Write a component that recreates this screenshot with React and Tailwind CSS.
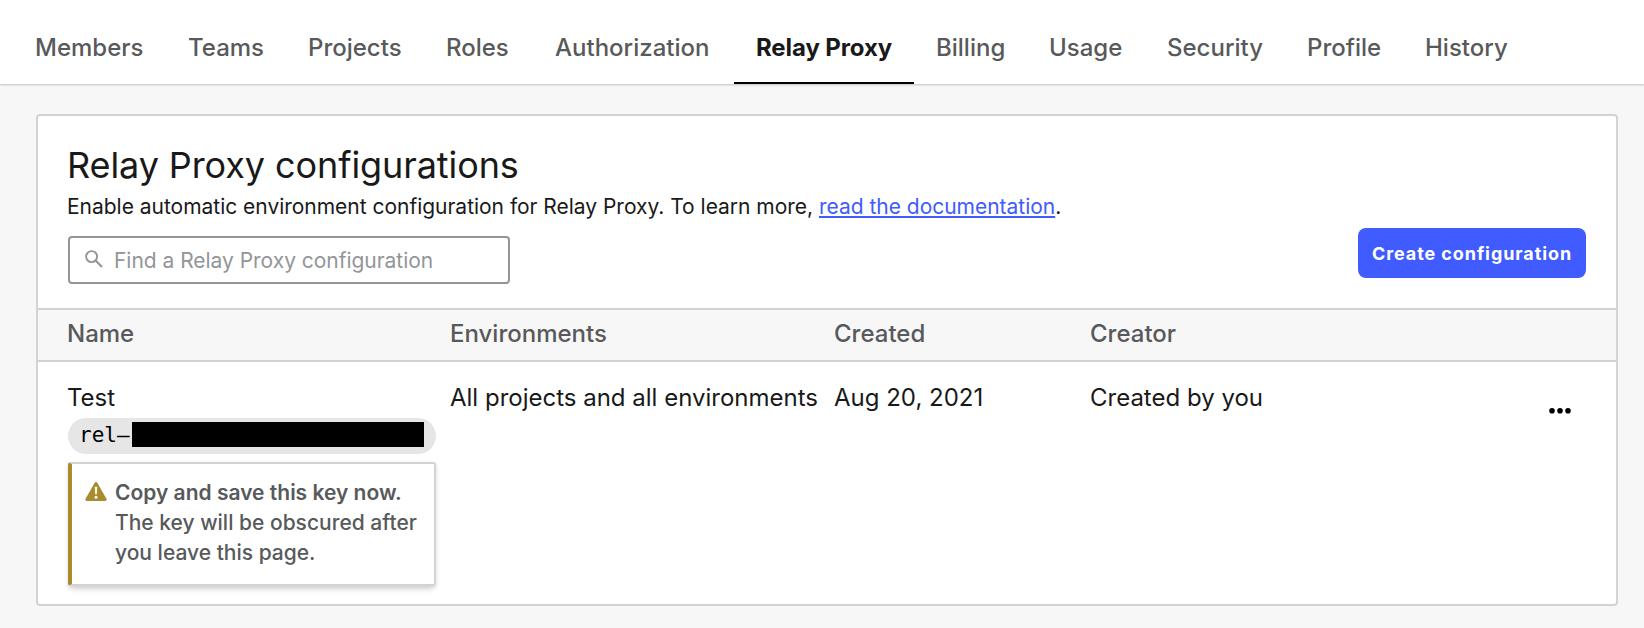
import React from "react";

const tabs = [
  { label: "Members", width: "w-[153px]" },
  { label: "Teams", width: "w-[120px]" },
  { label: "Projects", width: "w-[138px]" },
  { label: "Roles", width: "w-[109px]" },
  { label: "Authorization", width: "w-[201px]" },
  { label: "Relay Proxy", width: "w-[180px]", active: true },
  { label: "Billing", width: "w-[113px]" },
  { label: "Usage", width: "w-[118px]" },
  { label: "Security", width: "w-[140px]" },
  { label: "Profile", width: "w-[118px]" },
  { label: "History", width: "w-[126px]" },
];

function Nav() {
  return (
    <nav className="flex h-[84px] shrink-0 bg-white pl-[13px] shadow-[0_1px_2px_rgba(0,0,0,0.22)]">
      {tabs.map((t) => (
        <a
          key={t.label}
          className={`flex h-[84px] shrink-0 items-center border-b-2 pt-3.5 pl-[22px] text-2xl whitespace-nowrap ${t.width} ${
            t.active ? "border-black font-bold tracking-[-0.1px] text-[#191919]" : "border-transparent font-medium text-[#58595b]"
          }`}
        >
          {t.label}
        </a>
      ))}
    </nav>
  );
}

function SearchIcon() {
  return (
    <svg viewBox="0 0 18 18" className="-mt-0.5 h-[18px] w-[18px] shrink-0" fill="none" stroke="#939598" strokeWidth="1.9">
      <circle cx="6.6" cy="6.6" r="5.5" />
      <path d="M10.6 10.6 17 17" strokeWidth="2.1" />
    </svg>
  );
}

function WarningIcon() {
  return (
    <svg viewBox="0 0 22 19" className="mt-[5px] h-[19px] w-[22px] shrink-0">
      <path d="M9.6.9a1.6 1.6 0 0 1 2.8 0l8.9 15.6A1.6 1.6 0 0 1 19.9 19H2.1a1.6 1.6 0 0 1-1.4-2.5Z" fill="#a88b2c" />
      <path d="M9.8 4.8h2.4l-.4 7.4h-1.6Z" fill="#fff" />
      <circle cx="11" cy="15.2" r="1.5" fill="#fff" />
    </svg>
  );
}

function CardHeader() {
  return (
    <header className="flex h-[192px] items-end justify-between pr-[30px] pl-[29px]">
      <div className="flex h-full flex-col pt-[26px]">
        <h1 className="text-4xl leading-[46px] tracking-[-0.09px] whitespace-nowrap">Relay Proxy configurations</h1>
        <p className="mt-1 text-[21px] leading-[30px] tracking-[-0.02px] whitespace-nowrap">
          Enable automatic environment configuration for Relay Proxy. To learn more,{" "}
          <a className="text-[#405bff] underline decoration-2 underline-offset-2">read the documentation</a>.
        </p>
        <div className="mt-[14px] ml-px flex h-12 w-[442px] shrink-0 items-center gap-[11px] rounded border-2 border-[#939598] px-[15px] text-[21px] tracking-[-0.03px] whitespace-nowrap text-[#939598]">
          <SearchIcon />
          <span className="pt-px">Find a Relay Proxy configuration</span>
        </div>
      </div>
      <button className="mb-[30px] h-[50px] w-[228px] shrink-0 rounded-lg bg-[#405bff] pt-0.5 text-lg font-bold tracking-[0.92px] whitespace-nowrap text-white">
        Create configuration
      </button>
    </header>
  );
}

function KeyCell() {
  return (
    <div className="flex w-[368px] flex-col">
      <div className="-ml-px leading-9">Test</div>
      <div className="mt-[2px] flex h-9 items-center rounded-full bg-[#e6e6e6] pl-[11px]">
        <code className="-mt-0.5 w-[53px] font-['DejaVu_Sans_Mono',monospace] text-[21px] leading-7 text-black">rel–</code>
        <div className="-mt-[3px] h-[25px] w-[292px] bg-black" />
      </div>
      <div className="mt-2 flex h-[124px] rounded-[3px] border-y-2 border-r-2 border-l-4 border-[#d1d3d4] border-l-[#a88b2c] bg-white pt-[13px] pl-[13px] text-[21px] leading-[30px] font-medium text-[#58595b] shadow-[0_2px_4px_rgba(0,0,0,0.16),0_10px_6px_-4px_rgba(0,0,0,0.05)]">
        <WarningIcon />
        <div className="mt-px ml-2 whitespace-nowrap">
          <strong className="font-semibold">Copy and save this key now.</strong>
          <br />
          The key will be obscured after
          <br />
          you leave this page.
        </div>
      </div>
    </div>
  );
}

export default function App() {
  return (
    <div className="flex h-[628px] w-[1644px] flex-col overflow-hidden bg-[#f7f7f7] font-['Inter',sans-serif] text-[#191919]">
      <Nav />
      <main className="mt-[30px] ml-9 h-[492px] w-[1582px] rounded border-2 border-[#d1d3d4] bg-white">
        <CardHeader />
        <div className="flex h-[54px] items-center border-y-2 border-[#d1d3d4] bg-[#f7f7f7] pb-0.5 pl-[29px] text-2xl font-medium text-[#58595b]">
          <div className="w-[383px]">Name</div>
          <div className="w-[384px]">Environments</div>
          <div className="w-[256px]">Created</div>
          <div>Creator</div>
        </div>
        <div className="flex pt-[18px] pl-[30px] text-2xl leading-9 whitespace-nowrap">
          <div className="w-[382px]">
            <KeyCell />
          </div>
          <div className="w-[384px]">All projects and all environments</div>
          <div className="w-[256px]">Aug 20, 2021</div>
          <div className="w-[459px]">Created by you</div>
          <svg viewBox="0 0 22 6" className="mt-[28px] h-1.5 w-[22px]">
            <circle cx="3" cy="2.8" r="2.8" />
            <circle cx="11" cy="2.8" r="2.8" />
            <circle cx="19" cy="2.8" r="2.8" />
          </svg>
        </div>
      </main>
    </div>
  );
}
